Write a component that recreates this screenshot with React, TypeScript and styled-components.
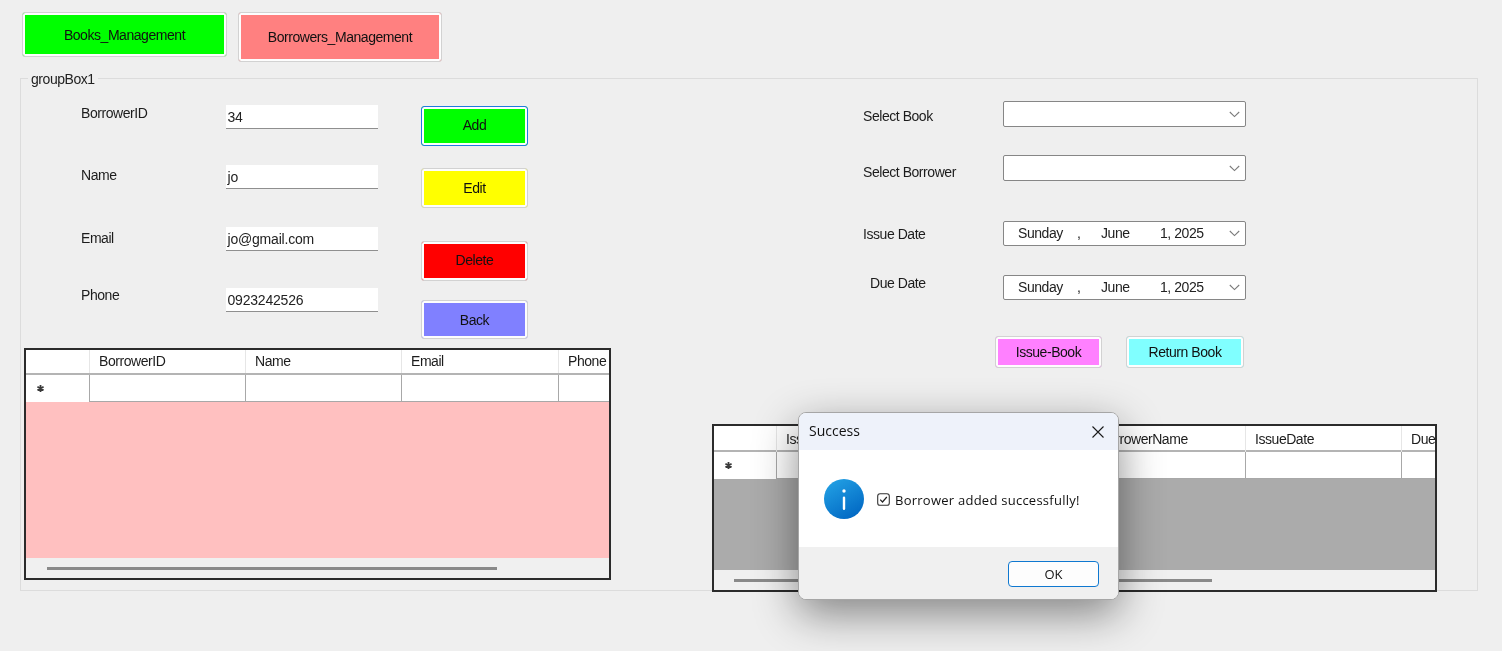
import React from "react";
import styled, { createGlobalStyle } from "styled-components";

const GlobalStyle = createGlobalStyle`
    html, body {
        margin: 0;
        padding: 0;
        background: #efefef;
    }
    * {
        box-sizing: border-box;
    }
    body {
        font-family: "Liberation Sans", Arial, sans-serif;
        font-size: 14px;
        letter-spacing: -0.45px;
        color: #111;
        overflow: hidden;
    }
`;

const leftColumns = "64px 156px 156px 157px 60px";
const rightColumns = "63px 156px 157px 156px 156px 156px 60px";

export default function App() {
    return (
        <Page>
            <GlobalStyle />
            <TopBar>
                <WinButton $w={205} $h={45} $bg="#00ff00">
                    Books_Management
                </WinButton>
                <WinButton $w={204} $h={50} $bg="#ff8080">
                    Borrowers_Management
                </WinButton>
            </TopBar>

            <GroupBox>
                <GroupTitle>groupBox1</GroupTitle>
                <LeftColumn>
                    <FormArea>
                        <Fields>
                            <FieldRow $top={0}>
                                <FieldLabel $shift={0}>BorrowerID</FieldLabel>
                                <TextInput>34</TextInput>
                            </FieldRow>
                            <FieldRow $top={36}>
                                <FieldLabel $shift={2}>Name</FieldLabel>
                                <TextInput>jo</TextInput>
                            </FieldRow>
                            <FieldRow $top={38}>
                                <FieldLabel $shift={3}>Email</FieldLabel>
                                <TextInput>jo@gmail.com</TextInput>
                            </FieldRow>
                            <FieldRow $top={37}>
                                <FieldLabel $shift={-1}>Phone</FieldLabel>
                                <TextInput>0923242526</TextInput>
                            </FieldRow>
                        </Fields>
                        <Actions>
                            <WinButton $w={107} $h={40} $bg="#00ff00" $focused $lift={2}>
                                Add
                            </WinButton>
                            <WinButton $w={107} $h={40} $top={22} $bg="#ffff00">
                                Edit
                            </WinButton>
                            <WinButton $w={107} $h={40} $top={33} $bg="#ff0000" $lift={2}>
                                Delete
                            </WinButton>
                            <WinButton $w={107} $h={39} $top={19} $bg="#8080ff">
                                Back
                            </WinButton>
                        </Actions>
                    </FormArea>

                    <GridView $w={587} $h={232}>
                        <HeaderRow $cols={leftColumns} $h={25} $line={22}>
                            <HeaderCell />
                            <HeaderCell>BorrowerID</HeaderCell>
                            <HeaderCell>Name</HeaderCell>
                            <HeaderCell>Email</HeaderCell>
                            <HeaderCell>Phone</HeaderCell>
                        </HeaderRow>
                        <NewRow $cols={leftColumns}>
                            <RowHeader>
                                <NewRowMark />
                            </RowHeader>
                            <RowCell />
                            <RowCell />
                            <RowCell />
                            <RowCell />
                        </NewRow>
                        <GridBody $bg="#ffc0c0" />
                        <ScrollBand>
                            <ScrollThumb $offset={21} $w={450} />
                        </ScrollBand>
                    </GridView>
                </LeftColumn>

                <RightColumn>
                    <ControlRow $top={0}>
                        <ControlLabel $shift={7}>Select Book</ControlLabel>
                        <DropDown $h={26}>
                            <Chevron />
                        </DropDown>
                    </ControlRow>
                    <ControlRow $top={28}>
                        <ControlLabel $shift={9}>Select Borrower</ControlLabel>
                        <DropDown $h={26}>
                            <Chevron />
                        </DropDown>
                    </ControlRow>
                    <ControlRow $top={40}>
                        <ControlLabel $shift={5}>Issue Date</ControlLabel>
                        <DropDown $h={25}>
                            <DateValue />
                            <Chevron />
                        </DropDown>
                    </ControlRow>
                    <ControlRow $top={29}>
                        <ControlLabel $shift={0} $indent={7}>
                            Due Date
                        </ControlLabel>
                        <DropDown $h={25}>
                            <DateValue />
                            <Chevron />
                        </DropDown>
                    </ControlRow>

                    <IssueActions>
                        <WinButton $w={107} $h={32} $bg="#ff80ff">
                            Issue-Book
                        </WinButton>
                        <WinButton $w={118} $h={32} $bg="#80ffff">
                            Return Book
                        </WinButton>
                    </IssueActions>

                    <GridView $w={725} $h={168}>
                        <HeaderRow $cols={rightColumns} $h={26} $line={26}>
                            <HeaderCell />
                            <HeaderCell>IssueID</HeaderCell>
                            <HeaderCell>BookTitle</HeaderCell>
                            <HeaderCell>BorrowerName</HeaderCell>
                            <HeaderCell>IssueDate</HeaderCell>
                            <HeaderCell>DueDate</HeaderCell>
                        </HeaderRow>
                        <NewRow $cols={rightColumns}>
                            <RowHeader>
                                <NewRowMark />
                            </RowHeader>
                            <RowCell />
                            <RowCell />
                            <RowCell />
                            <RowCell />
                            <RowCell />
                        </NewRow>
                        <GridBody $bg="#ababab" />
                        <ScrollBand>
                            <ScrollThumb $offset={20} $w={478} />
                        </ScrollBand>
                    </GridView>
                </RightColumn>
            </GroupBox>

            <Dialog>
                <DialogTitle>
                    Success
                    <CloseIcon />
                </DialogTitle>
                <DialogBody>
                    <InfoIcon />
                    <CheckedBox />
                    <DialogMessage>Borrower added successfully!</DialogMessage>
                </DialogBody>
                <DialogFooter>
                    <OkButton>OK</OkButton>
                </DialogFooter>
            </Dialog>
        </Page>
    );
}

function DateValue() {
    return (
        <DateText>
            <DatePart $w={59}>Sunday</DatePart>
            <DatePart $w={24}>,</DatePart>
            <DatePart $w={59}>June</DatePart>
            <DatePart>1, 2025</DatePart>
        </DateText>
    );
}

function Chevron() {
    return (
        <ChevronSvg width="11" height="7" viewBox="0 0 11 7">
            <path d="M0.8 1 L5.5 5.6 L10.2 1" fill="none" stroke="#7a7a7a" strokeWidth="1.1" />
        </ChevronSvg>
    );
}

function NewRowMark() {
    return (
        <svg width="7" height="7" viewBox="0 0 7 7">
            <path
                d="M3.5 0 V7 M0.4 1.7 L6.6 5.3 M0.4 5.3 L6.6 1.7"
                stroke="#3a3a3a"
                strokeWidth="1.8"
            />
        </svg>
    );
}

function CloseIcon() {
    return (
        <CloseSvg width="12" height="12" viewBox="0 0 12 12">
            <path d="M0.5 0.5 L11.5 11.5 M11.5 0.5 L0.5 11.5" stroke="#1a1a1a" strokeWidth="1.1" />
        </CloseSvg>
    );
}

function InfoIcon() {
    return (
        <svg width="40" height="40" viewBox="0 0 40 40">
            <defs>
                <linearGradient id="infoFill" x1="0.2" y1="0" x2="0.8" y2="1">
                    <stop offset="0" stopColor="#22a0e4" />
                    <stop offset="1" stopColor="#0066c2" />
                </linearGradient>
            </defs>
            <circle cx="20" cy="20" r="20" fill="url(#infoFill)" />
            <circle cx="20" cy="12" r="1.7" fill="#fff" />
            <rect x="18.8" y="17.5" width="2.4" height="13.5" rx="1.2" fill="#fff" />
        </svg>
    );
}

function CheckedBox() {
    return (
        <CheckSvg width="13" height="13" viewBox="0 0 13 13">
            <rect x="0.7" y="0.7" width="11.6" height="11.6" rx="2.4" fill="#fff" stroke="#333" strokeWidth="1.1" />
            <path d="M3.2 6.6 L5.5 9 L9.8 4" fill="none" stroke="#222" strokeWidth="1.2" />
        </CheckSvg>
    );
}

const Page = styled.div`
    position: relative;
    width: 1502px;
    height: 651px;
    padding: 12px 24px 0 20px;
    background: #efefef;
    overflow: hidden;
    filter: blur(0.5px);
`;

const TopBar = styled.div`
    display: flex;
    align-items: flex-start;
    gap: 11px;
    height: 66px;
    padding-left: 2px;
`;

const WinButton = styled.div<{
    $w: number;
    $h: number;
    $bg: string;
    $top?: number;
    $focused?: boolean;
    $lift?: number;
}>`
    display: flex;
    align-items: center;
    justify-content: center;
    flex: none;
    width: ${(p) => p.$w}px;
    height: ${(p) => p.$h}px;
    margin-top: ${(p) => p.$top ?? 0}px;
    padding-bottom: ${(p) => p.$lift ?? 0}px;
    background: ${(p) => p.$bg};
    border: 1px solid ${(p) => (p.$focused ? "#1f7ae0" : "#d2d2d2")};
    border-radius: 3px;
    box-shadow: inset 0 0 0 2px #fdfdfd;
    color: #111;
`;

const GroupBox = styled.div`
    position: relative;
    display: flex;
    align-items: flex-start;
    gap: 101px;
    width: 1458px;
    height: 513px;
    padding-left: 3px;
    border: 1px solid #dcdcdc;
`;

const GroupTitle = styled.div`
    position: absolute;
    top: -8px;
    left: 7px;
    padding: 0 3px;
    height: 16px;
    line-height: 16px;
    background: #efefef;
    color: #222;
`;

const LeftColumn = styled.div`
    display: flex;
    flex-direction: column;
    width: 587px;
    flex: none;
`;

const FormArea = styled.div`
    display: flex;
    align-items: flex-start;
    gap: 43px;
    height: 269px;
    padding: 26px 0 0 57px;
`;

const Fields = styled.div`
    display: flex;
    flex-direction: column;
    width: 297px;
`;

const FieldRow = styled.div<{ $top: number }>`
    display: flex;
    align-items: flex-start;
    margin-top: ${(p) => p.$top}px;
`;

const FieldLabel = styled.div<{ $shift: number }>`
    width: 145px;
    height: 16px;
    line-height: 16px;
    margin-top: ${(p) => p.$shift}px;
    color: #1c1c1c;
`;

const TextInput = styled.div`
    width: 153px;
    height: 24px;
    padding: 4px 0 0 2px;
    line-height: 17px;
    letter-spacing: -0.2px;
    background: #fff;
    border-bottom: 1px solid #8f8f8f;
    color: #222;
`;

const Actions = styled.div`
    display: flex;
    flex-direction: column;
    margin-top: 1px;
`;

const RightColumn = styled.div`
    display: flex;
    flex-direction: column;
    width: 725px;
    flex: none;
    padding-top: 22px;
`;

const ControlRow = styled.div<{ $top: number }>`
    display: flex;
    align-items: flex-start;
    margin-top: ${(p) => p.$top}px;
    padding-left: 151px;
`;

const ControlLabel = styled.div<{ $shift: number; $indent?: number }>`
    width: 140px;
    height: 16px;
    line-height: 16px;
    margin-top: ${(p) => p.$shift}px;
    padding-left: ${(p) => p.$indent ?? 0}px;
    color: #1c1c1c;
`;

const DropDown = styled.div<{ $h: number }>`
    display: flex;
    align-items: center;
    width: 243px;
    height: ${(p) => p.$h}px;
    padding: 0 5px 0 14px;
    background: #fff;
    border: 1px solid #868686;
    border-radius: 2px;
`;

const ChevronSvg = styled.svg`
    flex: none;
    margin-left: auto;
`;

const DateText = styled.div`
    display: flex;
    align-items: center;
    padding-bottom: 2px;
    color: #222;
`;

const DatePart = styled.span<{ $w?: number }>`
    display: inline-block;
    ${(p) => (p.$w ? `width: ${p.$w}px;` : "")}
`;

const IssueActions = styled.div`
    display: flex;
    gap: 24px;
    margin-top: 36px;
    padding-left: 283px;
`;

const GridView = styled.div<{ $w: number; $h: number }>`
    display: flex;
    flex-direction: column;
    flex: none;
    width: ${(p) => p.$w}px;
    height: ${(p) => p.$h}px;
    border: 2px solid #2b2b2b;
    background: #f0f0f0;
    overflow: hidden;
    ${RightColumn} & {
        margin-top: 56px;
    }
`;

const HeaderRow = styled.div<{ $cols: string; $h: number; $line: number }>`
    display: grid;
    grid-template-columns: ${(p) => p.$cols};
    flex: none;
    height: ${(p) => p.$h}px;
    line-height: ${(p) => p.$line}px;
    background: #fff;
    border-bottom: 2px solid #b4b4b4;
`;

const HeaderCell = styled.div`
    padding-left: 9px;
    border-right: 1px solid #e6e6e6;
    white-space: nowrap;
    color: #1c1c1c;
`;

const NewRow = styled.div<{ $cols: string }>`
    display: grid;
    grid-template-columns: ${(p) => p.$cols};
    flex: none;
    height: 27px;
    background: #fff;
`;

const RowHeader = styled.div`
    display: flex;
    align-items: center;
    padding-left: 11px;
    border-right: 1px solid #a8a8a8;
`;

const RowCell = styled.div`
    border-right: 1px solid #a8a8a8;
    border-bottom: 1px solid #a8a8a8;
`;

const GridBody = styled.div<{ $bg: string }>`
    flex: 1;
    background: ${(p) => p.$bg};
`;

const ScrollBand = styled.div`
    display: flex;
    align-items: center;
    flex: none;
    height: 20px;
    background: #f0f0f0;
`;

const ScrollThumb = styled.div<{ $offset: number; $w: number }>`
    width: ${(p) => p.$w}px;
    height: 3px;
    margin-left: ${(p) => p.$offset}px;
    background: #8a8a8a;
`;

const Dialog = styled.div`
    position: absolute;
    top: 412px;
    left: 798px;
    display: flex;
    flex-direction: column;
    width: 321px;
    height: 188px;
    font-family: "Open Sans", "Noto Sans", sans-serif;
    letter-spacing: 0;
    background: #fff;
    border: 1px solid #a6a6a6;
    border-radius: 8px;
    box-shadow: 0 14px 44px rgba(0, 0, 0, 0.45);
    overflow: hidden;
`;

const DialogTitle = styled.div`
    display: flex;
    align-items: center;
    justify-content: space-between;
    flex: none;
    height: 37px;
    padding: 0 14px 2px 10px;
    font-size: 14px;
    background: #eef2fa;
    color: #111;
`;

const CloseSvg = styled.svg`
    flex: none;
    margin-top: 2px;
`;

const DialogBody = styled.div`
    display: flex;
    align-items: center;
    flex: none;
    height: 97px;
    padding: 1px 0 0 25px;
    background: #fff;
`;

const CheckSvg = styled.svg`
    flex: none;
    margin-left: 13px;
`;

const DialogMessage = styled.div`
    margin-left: 5px;
    padding-top: 1px;
    font-size: 13px;
    letter-spacing: 0.25px;
    white-space: nowrap;
    color: #111;
`;

const DialogFooter = styled.div`
    display: flex;
    flex: 1;
    justify-content: flex-end;
    align-items: flex-start;
    padding: 14px 19px 0 0;
    background: #f0f0f0;
`;

const OkButton = styled.div`
    display: flex;
    align-items: center;
    justify-content: center;
    width: 91px;
    height: 26px;
    font-size: 13px;
    background: #fdfdfd;
    border: 1.5px solid #0f78d0;
    border-radius: 4px;
    color: #111;
`;
